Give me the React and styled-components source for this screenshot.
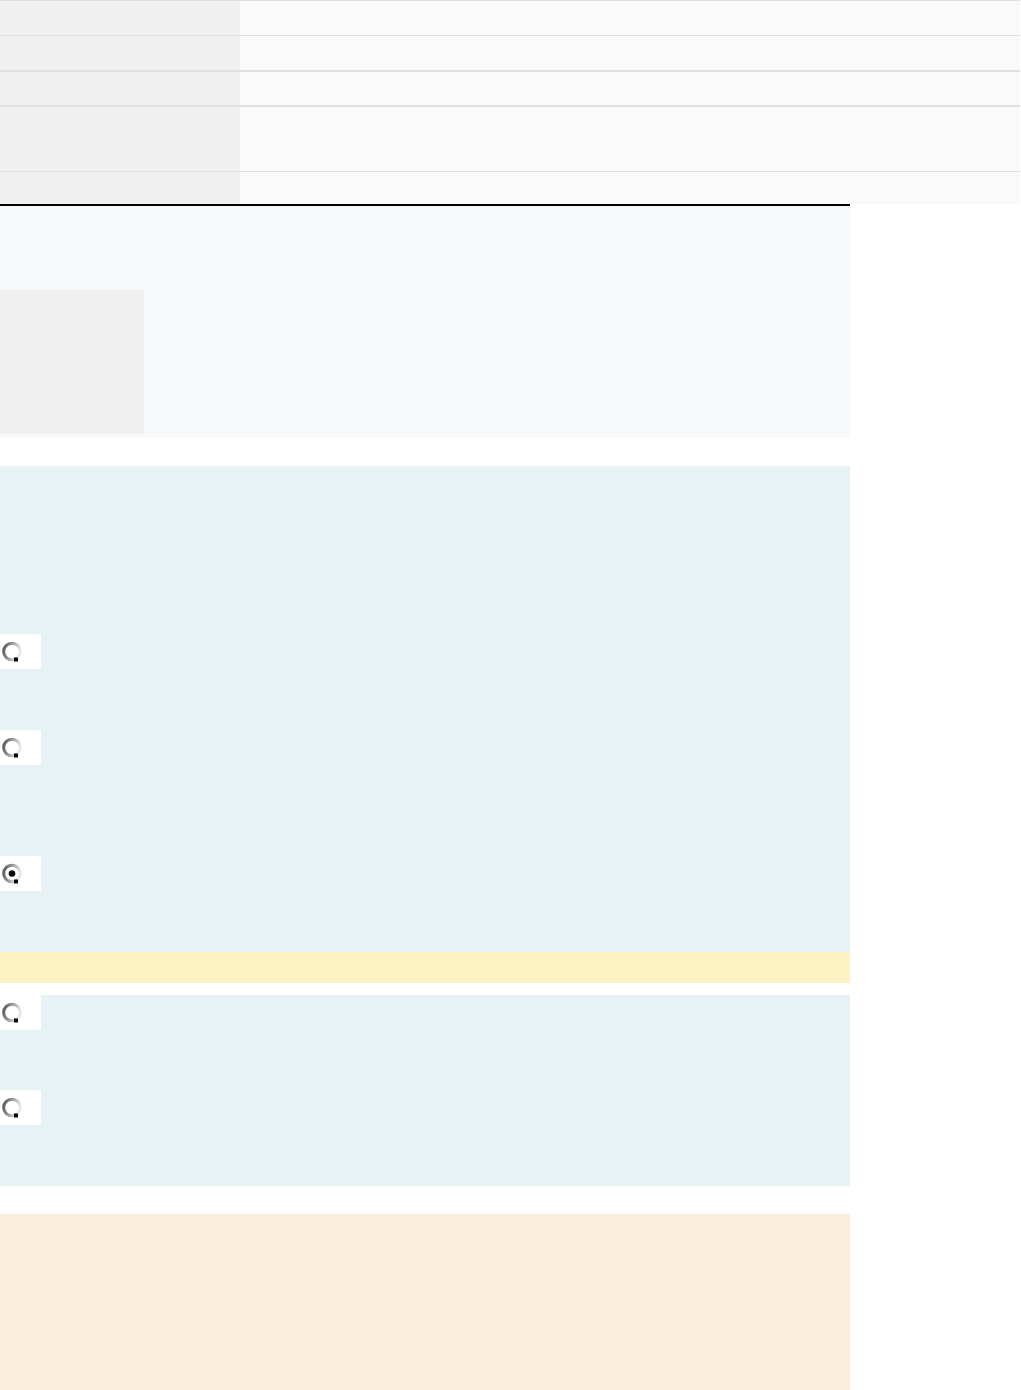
import styled, { createGlobalStyle } from 'styled-components'

const GlobalStyle = createGlobalStyle`
  html, body {
    margin: 0;
    padding: 0;
    background: #ffffff;
    font-family: "Liberation Sans", Arial, sans-serif;
  }
  #root {
    min-height: 1390px;
  }
`

const rows = [
  { h: 34, border: '1px solid #e2e2e4' },
  { h: 34, border: '2px solid #dcdfe3' },
  { h: 33, border: '2px solid #dcdfe3' },
  { h: 64, border: '1px solid #e2e2e4' },
  { h: 32, border: 'none' },
]

const Radio = ({ checked }) => {
  const id = checked ? 'rgc' : 'rg'
  return (
    <svg width="22" height="24" viewBox="0 0 22 24">
      <defs>
        <linearGradient id={id} x1="0" y1="0" x2="1" y2="0.3">
          <stop offset="0" stopColor="#505050" />
          <stop offset="0.5" stopColor="#9a9a9a" />
          <stop offset="1" stopColor="#e8e8e8" />
        </linearGradient>
      </defs>
      <circle cx="11" cy="11.5" r="8.3" fill="#ffffff" stroke={`url(#${id})`} strokeWidth="3" />
      <path d="M13 17.5 h4 v4 h-4 z" fill="#0a0a0a" />
      {checked && <circle cx="11" cy="11.5" r="3.3" fill="#0a0a0a" />}
    </svg>
  )
}

export default function App() {
  return (
    <Page>
      <GlobalStyle />
      <Table>
        {rows.map((r, i) => (
          <Row key={i} $h={r.h} $border={r.border}>
            <Label />
            <Value />
          </Row>
        ))}
      </Table>

      <Intro>
        <Thumb />
      </Intro>

      <Options>
        <RadioBox $top={168}><Radio /></RadioBox>
        <RadioBox $top={61}><Radio /></RadioBox>
        <RadioBox $top={91}><Radio checked /></RadioBox>
      </Options>

      <Notice />

      <Options $after>
        <RadioBox $top={0}><Radio /></RadioBox>
        <RadioBox $top={60}><Radio /></RadioBox>
      </Options>

      <Footer />
    </Page>
  )
}

const Page = styled.div`
  display: flex;
  flex-direction: column;
  width: 1021px;
`

const Table = styled.div`
  width: 1020px;
  border-top: 1px solid #dde0e4;
  display: flex;
  flex-direction: column;
`

const Row = styled.div`
  display: flex;
  height: ${p => p.$h}px;
  border-bottom: ${p => p.$border};
`

const Label = styled.div`
  width: 240px;
  background: #f0f0f0;
`

const Value = styled.div`
  flex: 1;
  background: #fafafa;
`

const Intro = styled.section`
  width: 850px;
  height: 234px;
  box-sizing: border-box;
  border-top: 2px solid #000;
  background: #f7f8fa;
  padding-top: 84px;
`

const Thumb = styled.div`
  width: 144px;
  height: 144px;
  background: #f0f0f0;
`

const Options = styled.section`
  width: 850px;
  margin-top: ${p => (p.$after ? 12 : 28)}px;
  padding-bottom: 61px;
  background: #e7f2f4;
  display: flex;
  flex-direction: column;
`

const RadioBox = styled.div`
  width: 41px;
  height: 35px;
  margin-top: ${p => p.$top}px;
  background: #ffffff;
  display: flex;
  align-items: center;
  padding-left: 1px;
  box-sizing: border-box;
`

const Notice = styled.div`
  width: 850px;
  height: 31px;
  background: #fff2c2;
`

const Footer = styled.section`
  width: 850px;
  height: 176px;
  margin-top: 28px;
  background: #faeddb;
`
